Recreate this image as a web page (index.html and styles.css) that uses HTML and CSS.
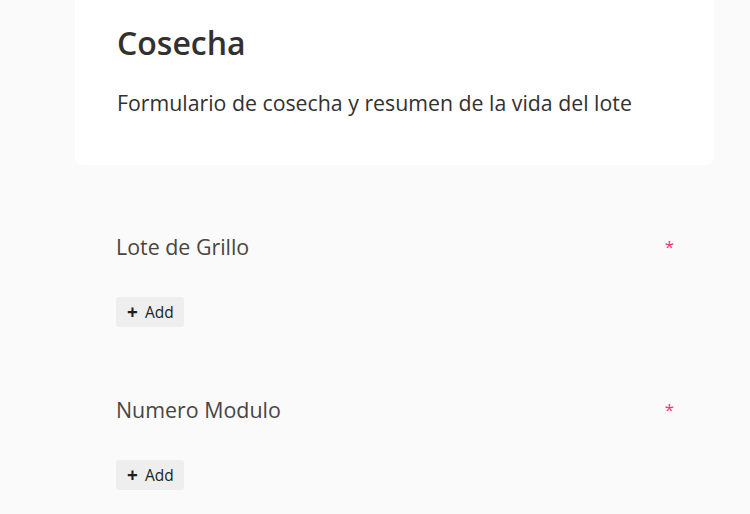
FILE: index.html
```html
<!DOCTYPE html>
<html lang="es">
<head>
<meta charset="utf-8">
<link rel="stylesheet" href="styles.css">
</head>
<body>
<main class="form">
  <header class="card">
    <h1 class="title">Cosecha</h1>
    <p class="subtitle">Formulario de cosecha y resumen de la vida del lote</p>
  </header>
  <section class="question">
    <div class="q-head">
      <span class="q-label">Lote de Grillo</span>
      <span class="req">*</span>
    </div>
    <button class="add"><span class="plus">+</span>Add</button>
  </section>
  <section class="question">
    <div class="q-head">
      <span class="q-label">Numero Modulo</span>
      <span class="req">*</span>
    </div>
    <button class="add"><span class="plus">+</span>Add</button>
  </section>
</main>
</body>
</html>
```
FILE: styles.css
```css
html, body {
  margin: 0;
  padding: 0;
  background: #fafafa;
  font-family: "Open Sans", "Noto Sans", sans-serif;
  color: #323130;
}
.form {
  width: 639px;
  margin-left: 75px;
}
.card {
  background: #ffffff;
  border-radius: 0 0 8px 8px;
  padding: 21px 42px 48px;
}
.title {
  margin: 0;
  font-size: 32px;
  font-weight: 550;
  line-height: 44px;
  color: #323130;
}
.subtitle {
  margin: 24px 0 0;
  font-size: 21.3px;
  line-height: 28px;
  color: #323130;
}
.question {
  padding: 0 42px 0 41px;
  margin-top: 67px;
}
.question + .question {
  margin-top: 68px;
}
.q-head {
  display: flex;
  justify-content: space-between;
  align-items: flex-start;
  height: 30px;
}
.q-label {
  font-size: 21.4px;
  line-height: 30px;
  color: #484644;
}
.req {
  font-size: 17px;
  line-height: 30px;
  color: #f5336f;
  margin-right: -2px;
}
.add {
  margin-top: 35px;
  display: flex;
  align-items: center;
  height: 30px;
  padding: 0 10px 0 11px;
  border: none;
  border-radius: 3px;
  background: #eeeeee;
  font-family: inherit;
  font-size: 15.5px;
  color: #201f1e;
  cursor: pointer;
}
.plus {
  font-weight: 700;
  font-size: 19px;
  margin-right: 7px;
  line-height: 1;
}
```
